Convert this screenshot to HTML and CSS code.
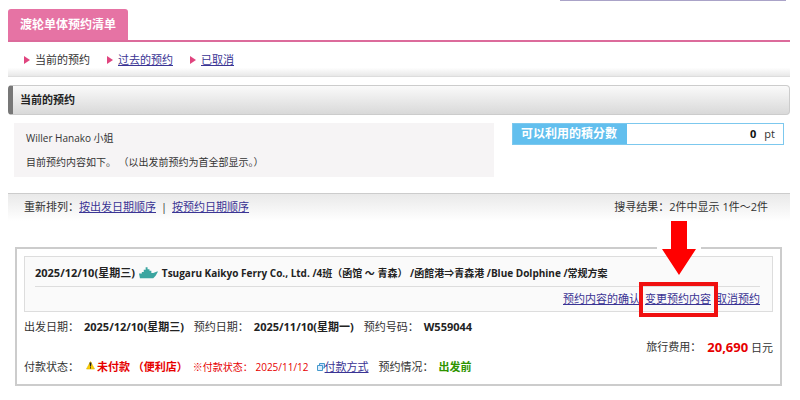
FILE: index.html
```
<!DOCTYPE html>
<html lang="zh-CN">
<head>
    <meta charset="UTF-8">
    <meta name="viewport" content="width=device-width, initial-scale=1.0">
    <title>渡轮单体预约清单</title>
    <link rel="stylesheet" href="styles.css">
</head>
<body>
    <div class="top-line"></div>

    <header class="tab-bar">
        <h1 class="tab">渡轮单体预约清单</h1>
    </header>

    <nav class="sub-nav">
        <span class="nav-item">当前的预约</span>
        <span class="nav-item"><a href="#past">过去的预约</a></span>
        <span class="nav-item"><a href="#cancelled">已取消</a></span>
    </nav>

    <h2 class="section-title">当前的预约</h2>

    <section class="summary">
        <div class="greeting">
            <p>Willer Hanako 小姐</p>
            <p>目前预约内容如下。 （以出发前预约为首全部显示。）</p>
        </div>
        <div class="points">
            <div class="points-label">可以利用的積分數</div>
            <div class="points-value"><b>0</b><span>pt</span></div>
        </div>
    </section>

    <div class="sort-bar">
        <div class="sort-links">重新排列：<a href="#departure">按出发日期顺序</a><span class="divider">|</span><a href="#booking">按预约日期顺序</a></div>
        <div>搜寻结果：2件中显示 1件～2件</div>
    </div>

    <article class="booking">
        <div class="booking-head">
            <h3 class="booking-title">
                <span>2025/12/10(星期三)</span>
                <svg class="ship" viewBox="0 0 20 12" aria-hidden="true">
                    <path fill="#3ba5a0" d="M0 6.500h3V5h2V2.500h2V0h2v2h2v1.500h2V6h2l4-1.500h1L17.500 9 15 11.500H1z"/>
                </svg>
                <span class="route">Tsugaru Kaikyo Ferry Co., Ltd. /4班（函馆 ～ 青森） /函館港⇒青森港 /Blue Dolphine /常规方案</span>
            </h3>
            <div class="booking-links">
                <a href="#confirm">预约内容的确认</a>
                <span class="marked">
                    <a href="#change">变更预约内容</a>
                    <span class="frame"></span>
                    <svg class="arrow" viewBox="0 0 44 54" aria-hidden="true">
                        <path fill="#fff" d="M0 24h44v8H0z"/>
                        <path fill="#f00" d="M14 0h16v28h9L22 54 5 28h9z"/>
                    </svg>
                </span>
                <a href="#cancel">取消预约</a>
            </div>
        </div>

        <div class="booking-body">
            <div class="details">
                <dl class="row">
                    <dt>出发日期：</dt><dd>2025/12/10(星期三)</dd>
                    <dt>预约日期：</dt><dd>2025/11/10(星期一)</dd>
                    <dt>预约号码：</dt><dd>W559044</dd>
                </dl>
                <dl class="row">
                    <dt>付款状态：</dt>
                    <dd class="unpaid">
                        <svg class="warn" viewBox="0 0 9 9" aria-hidden="true">
                            <path fill="#fc0" stroke="#db0" stroke-width=".6" stroke-linejoin="round" d="M4.500.5l4 7.500h-8z"/>
                            <path fill="#222" d="M3.500 1.500h2L5 5.500H4zM4 6.200h1v1.200H4z"/>
                        </svg>
                        <span>未付款 （便利店）</span>
                    </dd>
                    <dd class="deadline">※付款状态： 2025/11/12</dd>
                    <dd class="method">
                        <svg class="window" viewBox="0 0 8 8" aria-hidden="true">
                            <path fill="#cdf" stroke="#49c" d="M2.500.5h5v4.500h-5z"/>
                            <path fill="#def" stroke="#49c" d="M.5 2.500h5v5h-5z"/>
                        </svg><a href="#payment">付款方式</a>
                    </dd>
                    <dt>预约情况：</dt><dd class="status">出发前</dd>
                </dl>
            </div>
            <div class="price"><span>旅行费用：</span><span><strong>20,690</strong> 日元</span></div>
        </div>
    </article>
</body>
</html>
```
FILE: styles.css
```
* {
    box-sizing: border-box;
}
body {
    margin: 0 10px 0 8px;
    font-family: "Open Sans", "Noto Sans CJK SC", sans-serif;
    font-size: 11px;
    line-height: 16px;
    color: #333;
    background: #fff;
}
h1, h2, h3, p, dl, dt, dd {
    margin: 0;
}
a {
    color: #3a3494;
}
.top-line {
    width: 226px;
    height: 1px;
    margin: 0 4px 8px auto;
    background: #aaa3c8;
}

/* tab and sub navigation */
.tab-bar {
    display: flex;
    border-bottom: 2px solid #dc6b9b;
}
.tab {
    padding: 8px 12px 7px;
    border-radius: 3px 3px 0 0;
    background: #e673a4;
    color: #fff;
    font-size: 12px;
    font-weight: bold;
}
.sub-nav {
    display: flex;
    gap: 17px;
    padding: 10px 16px 8px;
    border-bottom: 1px solid #ddd;
    background: linear-gradient(#fff 75%, #e8e8e8);
}
.nav-item {
    display: flex;
    align-items: center;
    gap: 5px;
}
.nav-item::before {
    content: "";
    border-left: 6px solid #e0457f;
    border-top: 4px solid transparent;
    border-bottom: 4px solid transparent;
}
.section-title {
    margin-top: 8px;
    padding: 6px 7px;
    border: 1px solid #ccc;
    border-left: 5px solid #777;
    border-radius: 4px;
    background: linear-gradient(#fafafa, #d9d9d9);
    color: #222;
    font-size: 11px;
    font-weight: bold;
}

/* greeting and points */
.summary {
    display: grid;
    grid-template-columns: 480fr 272fr;
    align-items: start;
    gap: 18px;
    margin: 8px 6px 0;
}
.greeting {
    padding: 7px 12px;
    background: #f6f4f5;
    font-size: 10px;
}
.greeting p + p {
    margin-top: 8px;
}
.points {
    display: flex;
    border: 1px solid #7cc8ee;
    line-height: 20px;
}
.points-label {
    padding: 0 10px 0 8px;
    background: #62bfee;
    color: #fff;
    font-size: 12px;
    font-weight: bold;
}
.points-value {
    flex: 1;
    display: flex;
    justify-content: flex-end;
    gap: 8px;
    padding-right: 8px;
}
.points-value b {
    color: #111;
}
.sort-bar {
    display: flex;
    justify-content: space-between;
    margin-top: 16px;
    padding: 5px 22px 6px 16px;
    border-top: 1px solid #ccc;
    background: linear-gradient(#e9e9e9, #fff);
}
.divider {
    margin: 0 5px;
}

/* booking card */
.booking {
    margin: 26px 8px 0 7px;
    padding: 7px;
    border: 2px solid #ccc;
}
.booking-head {
    padding: 8px 12px 4px 10px;
    border: 1px solid #ddd;
    background: #fafafa;
}
.booking-title {
    display: flex;
    align-items: center;
    gap: 4px;
    padding-bottom: 5px;
    border-bottom: 1px solid #ddd;
    color: #222;
    font-size: 11px;
    font-weight: bold;
    white-space: nowrap;
}
.route {
    font-size: 10px;
}
.ship {
    width: 19px;
    height: 12px;
}
.booking-links {
    display: flex;
    justify-content: flex-end;
    gap: 5px;
    padding: 4px 0 0;
}
.marked {
    position: relative;
}
.frame {
    position: absolute;
    inset: -9px -7px -10px -6px;
    border: 4px solid #f01010;
    pointer-events: none;
}
.arrow {
    position: absolute;
    bottom: 32px;
    left: 12px;
    width: 44px;
    height: 54px;
}
.booking-body {
    display: flex;
    justify-content: space-between;
    align-items: center;
    padding: 7px 0 2px;
}
.row {
    display: flex;
    white-space: nowrap;
}
.row + .row {
    margin-top: 24px;
}
.row dd {
    margin: 0 10px 0 5px;
    color: #222;
    font-weight: bold;
}
.row .unpaid {
    display: flex;
    gap: 2px;
    margin: 0 5px 0 7px;
    color: #e60000;
}
.warn {
    width: 9px;
    height: 9px;
    margin-top: 2px;
}
.row .deadline {
    margin: 0 8px 0 0;
    color: #e60000;
    font-size: 10px;
    font-weight: normal;
}
.row .method {
    margin-left: 0;
    font-weight: normal;
}
.window {
    width: 8px;
    height: 8px;
}
.row .status {
    color: #2e9400;
}
.price {
    display: flex;
    gap: 6px;
    white-space: nowrap;
}
.price strong {
    color: #e60000;
    font-size: 13px;
}
```
